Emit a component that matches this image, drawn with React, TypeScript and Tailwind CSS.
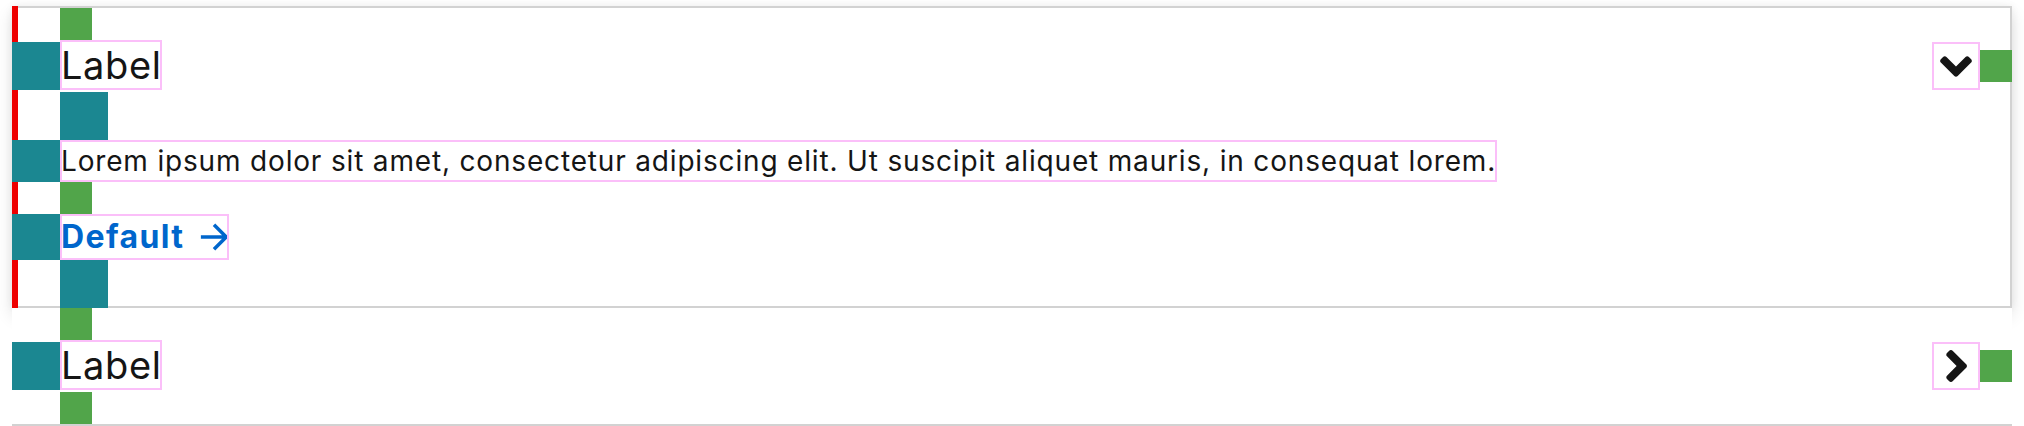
import * as React from "react"

// debug swatches: teal = inset/padding, green = spacer
function Inset({ className = "" }: { className?: string }) {
  return <div className={"shrink-0 bg-[#1b8791] " + className} />
}

function Spacer({ className = "" }: { className?: string }) {
  return <div className={"shrink-0 bg-[#51a54a] " + className} />
}

function AngleDown() {
  return (
    <svg viewBox="0 150 320 212" width="32" height="21" fill="#151515">
      <path d="M143 352.3L7 216.3c-9.4-9.4-9.4-24.6 0-33.9l22.6-22.6c9.4-9.4 24.6-9.4 33.9 0l96.4 96.4 96.4-96.4c9.4-9.4 24.6-9.4 33.9 0l22.6 22.6c9.4 9.4 9.4 24.6 0 33.9l-136 136c-9.2 9.4-24.4 9.4-33.8 0z" />
    </svg>
  )
}

function AngleRight() {
  return (
    <svg viewBox="22 96 210 320" width="21" height="32" fill="#151515">
      <path d="M224.3 273l-136 136c-9.4 9.4-24.6 9.4-33.9 0l-22.6-22.6c-9.4-9.4-9.4-24.6 0-33.9l96.4-96.4-96.4-96.4c-9.4-9.4-9.4-24.6 0-33.9L54.3 103c9.4-9.4 24.6-9.4 33.9 0l136 136c9.5 9.4 9.5 24.6.1 34z" />
    </svg>
  )
}

function Header({ expanded }: { expanded: boolean }) {
  return (
    <div className="flex h-[52px] items-center">
      <Inset className="h-12 w-12" />
      <div className="h-[50px] self-start px-[1px] text-[38px] leading-[50px] tracking-[0.6px] text-[#151515] outline-2 -outline-offset-2 outline-[#fbbff9]">
        Label
      </div>
      <div className="flex-1" />
      <div className="flex h-12 w-12 items-center justify-center outline-2 -outline-offset-2 outline-[#fbbff9]">
        {expanded ? <AngleDown /> : <AngleRight />}
      </div>
      <Spacer className="h-8 w-8" />
    </div>
  )
}

export default function App() {
  return (
    <div className="h-[426px] w-[2024px] overflow-hidden bg-white px-3 pt-1.5 font-['Inter',sans-serif]">
      {/* expanded */}
      <div className="bg-white pt-[2px] shadow-[inset_6px_0_0_0_#ee0000,inset_0_0_0_2px_#d2d2d2,0_8px_16px_0_rgba(3,3,3,0.12),0_0_8px_0_rgba(3,3,3,0.06)]">
        <Spacer className="ml-12 h-8 w-8" />
        <Header expanded />
        <Inset className="ml-12 h-12 w-12" />
        <div className="flex">
          <Inset className="h-[42px] w-12" />
          <div className="h-[42px] px-[1px] text-[28px] leading-[42px] tracking-[0.83px] text-[#151515] outline-2 -outline-offset-2 outline-[#fbbff9]">
            Lorem ipsum dolor sit amet, consectetur adipiscing elit. Ut suscipit aliquet mauris, in consequat lorem.
          </div>
        </div>
        <Spacer className="ml-12 h-8 w-8" />
        <div className="flex">
          <Inset className="h-[46px] w-12" />
          <a className="flex h-[46px] items-center gap-4 px-[1px] text-[32px] font-bold tracking-[1.4px] text-[#0066cc] outline-2 -outline-offset-2 outline-[#fbbff9]">
            Default
            <svg viewBox="4 4 16 16" width="28" height="28" fill="none" stroke="#0066cc" strokeWidth="2">
              <path d="M4.5 12h14M12 5l7 7-7 7" />
            </svg>
          </a>
        </div>
        <Inset className="ml-12 h-12 w-12" />
      </div>

      {/* collapsed */}
      <div className="border-b-2 border-[#d2d2d2] bg-white">
        <Spacer className="ml-12 h-8 w-8" />
        <Header expanded={false} />
        <Spacer className="ml-12 h-8 w-8" />
      </div>
    </div>
  )
}
